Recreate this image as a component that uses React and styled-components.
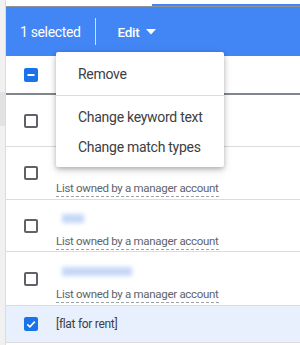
import React from "react";
import styled, { createGlobalStyle } from "styled-components";

const GlobalStyle = createGlobalStyle`
  html, body {
    margin: 0;
    padding: 0;
    background: #ffffff;
    font-family: Roboto, "Noto Sans", Arial, sans-serif;
  }
  * { box-sizing: border-box; }
`;

const Page = styled.div`
  display: flex;
  width: 300px;
  height: 345px;
  overflow: hidden;
  position: relative;
`;

const Rail = styled.div`
  width: 6px;
  flex: none;
  display: flex;
  flex-direction: column;
  background: #f1f1f1;
  border-right: 1px solid #dcdcdc;
`;

const RailShade = styled.div`
  margin-top: 92px;
  height: 34px;
  background: #e2e2e2;
`;

const Main = styled.div`
  flex: 1;
  display: flex;
  flex-direction: column;
  min-width: 0;
`;

const TopStrip = styled.div`
  height: 7px;
  display: flex;
  align-items: flex-end;
  border-bottom: 1px solid #8f959b;
  background: #ffffff;
`;

const TopStub = styled.div`
  margin-left: 146px;
  flex: 1;
  height: 2px;
  background: #4285f4;
`;

const ActionBar = styled.div`
  height: 49px;
  display: flex;
  align-items: center;
  padding-left: 14px;
  background: #4285f4;
  color: #ffffff;
`;

const SelectedCount = styled.span`
  font-size: 14px;
  letter-spacing: -0.35px;
`;

const BarDivider = styled.div`
  width: 1px;
  height: 27px;
  margin: 0 22px 0 14px;
  background: rgba(255, 255, 255, 0.75);
`;

const EditButton = styled.div`
  display: flex;
  align-items: center;
  gap: 7px;
  font-size: 13.5px;
  font-weight: 500;
  letter-spacing: -0.3px;
`;

const HeadRow = styled.div`
  height: 39px;
  display: flex;
  align-items: center;
  padding-left: 18px;
  border-bottom: 2px solid #80868b;
`;

const Row = styled.div`
  height: ${(p) => p.h}px;
  display: flex;
  align-items: center;
  gap: 18px;
  padding-left: 18px;
  border-bottom: 1px solid #dadce0;
  background: ${(p) => (p.selected ? "#e8f0fe" : "#ffffff")};
`;

const Box = styled.div`
  width: 14px;
  height: 14px;
  flex: none;
  border-radius: 2px;
  display: flex;
  align-items: center;
  justify-content: center;
  border: ${(p) => (p.on ? "none" : "2px solid #5f6368")};
  background: ${(p) => (p.on ? "#1a73e8" : "transparent")};
`;

const Cell = styled.div`
  display: flex;
  flex-direction: column;
  align-items: flex-start;
  padding-top: 7px;
`;

const Keyword = styled.div`
  font-size: 12px;
  letter-spacing: -0.3px;
  line-height: 20px;
  color: #3c4043;
`;

const Blur = styled.div`
  height: 20px;
  display: flex;
  align-items: center;
`;

const BlurBlock = styled.div`
  width: ${(p) => p.w}px;
  height: 9px;
  margin-left: ${(p) => p.off}px;
  background: #c4d8f7;
  filter: blur(2px);
`;

const Owner = styled.div`
  margin-top: 5px;
  font-size: 11.5px;
  letter-spacing: -0.3px;
  line-height: 14px;
  padding-bottom: 1px;
  color: #5f6368;
  border-bottom: 1px dashed #9aa0a6;
`;

const Menu = styled.div`
  position: absolute;
  top: 52px;
  left: 56px;
  width: 168px;
  padding: 6px 0 5px;
  background: #ffffff;
  border-radius: 2px;
  box-shadow: 0 2px 4px rgba(0, 0, 0, 0.22), 0 3px 10px rgba(0, 0, 0, 0.14);
  z-index: 2;
`;

const MenuItem = styled.div`
  height: ${(p) => p.h || 30}px;
  display: flex;
  align-items: center;
  padding-left: 22px;
  font-size: 14px;
  letter-spacing: -0.28px;
  color: #3c4043;
`;

const MenuRule = styled.div`
  height: 1px;
  margin: 5px 0 6px;
  background: #dadce0;
`;

const Check = ({ state }) => {
  if (state === "off") return <Box />;
  return (
    <Box on>
      {state === "mixed" ? (
        <svg width="10" height="10" viewBox="0 0 10 10">
          <rect x="1.5" y="4" width="7" height="2" fill="#fff" />
        </svg>
      ) : (
        <svg width="12" height="12" viewBox="0 0 12 12">
          <path d="M2.3 6.3 L4.9 8.8 L9.8 3.6" fill="none" stroke="#fff" strokeWidth="1.6" />
        </svg>
      )}
    </Box>
  );
};

// row 1 sits fully under the open menu, row 2's keyword too
const rows = [
  { h: 52, owner: false },
  { h: 53, owner: true, blur: null },
  { h: 52, owner: true, blur: [22, 6] },
  { h: 54, owner: true, blur: [70, 6] },
];

export default function App() {
  return (
    <>
      <GlobalStyle />
      <Page>
        <Rail>
          <RailShade />
        </Rail>
        <Main>
          <TopStrip>
            <TopStub />
          </TopStrip>
          <ActionBar>
            <SelectedCount>1 selected</SelectedCount>
            <BarDivider />
            <EditButton>
              Edit
              <svg width="10" height="6" viewBox="0 0 10 6">
                <path d="M0 0 L10 0 L5 5.5 Z" fill="#fff" />
              </svg>
            </EditButton>
          </ActionBar>
          <HeadRow>
            <Check state="mixed" />
          </HeadRow>
          {rows.map((r, i) => (
            <Row key={i} h={r.h}>
              <Check state="off" />
              {r.owner && (
                <Cell>
                  <Blur>{r.blur && <BlurBlock w={r.blur[0]} off={r.blur[1]} />}</Blur>
                  <Owner>List owned by a manager account</Owner>
                </Cell>
              )}
            </Row>
          ))}
          <Row h={37} selected>
            <Check state="on" />
            <Keyword>[flat for rent]</Keyword>
          </Row>
        </Main>
        <Menu>
          <MenuItem h={32}>Remove</MenuItem>
          <MenuRule />
          <MenuItem>Change keyword text</MenuItem>
          <MenuItem>Change match types</MenuItem>
        </Menu>
      </Page>
    </>
  );
}
